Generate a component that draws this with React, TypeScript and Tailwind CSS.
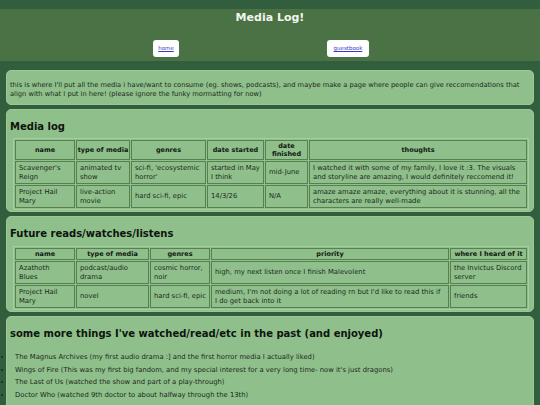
import React from "react";

const panel = "mx-[6px] rounded-[5px] border border-[#9cc897] bg-[#8fbf8b] px-[3px]";
const th = "border border-[#56804f] px-0 py-[1px] text-center text-[6.5px] font-bold leading-[8px] text-[#101a10]";
const td = "border border-[#56804f] px-[3px] py-[2px] align-middle leading-[8.5px] text-[#1b2a1b]";

const items = [
  "The Magnus Archives (my first audio drama :] and the first horror media I actually liked)",
  "Wings of Fire (This was my first big fandom, and my special interest for a very long time- now it's just dragons)",
  "The Last of Us (watched the show and part of a play-through)",
  "Doctor Who (watched 9th doctor to about halfway through the 13th)",
];

export default function App() {
  return (
    <div className="min-h-[405px] bg-[#335e3e] pt-[9px] text-[#1b2a1b]" style={{ fontFamily: '"DejaVu Sans", Verdana, sans-serif' }}>
      <div className="h-[52px] bg-[#4b7245]">
        <h1 className="pt-[2px] text-center text-[11px] font-bold leading-[14px] text-[#f2f5f0]">Media Log!</h1>
        <div className="mt-[15px] flex pl-[153px]">
          <div className="flex h-[17px] w-[26px] items-center justify-center rounded-[3px] bg-white">
            <a href="#" className="text-[5.5px] text-[#3838c0] underline">home</a>
          </div>
          <div className="ml-[148px] flex h-[17px] w-[42px] items-center justify-center rounded-[3px] bg-white">
            <a href="#" className="text-[5.5px] text-[#3838c0] underline">guestbook</a>
          </div>
        </div>
      </div>

      <div className="mt-[9px] flex flex-col gap-[4px]">
        <div className={panel + " pb-[6px] pt-[10px]"}>
          <p className="-mr-[3px] text-[6.7px] leading-[8.5px]">
            this is where I'll put all the media i have/want to consume (eg. shows, podcasts), and maybe make a page where people can give reccomendations that<br />align with what I put in here! (please ignore the funky mormatting for now)
          </p>
        </div>

        <div className={panel + " pb-[1px] pt-[11px]"}>
          <h2 className="text-[10px] font-bold leading-[12px] text-[#0d150d]">Media log</h2>
          <table className="mx-[3px] mt-[5px] w-[516px] table-fixed border-separate border-spacing-[1px] border border-[#a5cda0] text-[6.8px]">
            <colgroup>
              <col className="w-[60px]" />
              <col className="w-[54px]" />
              <col className="w-[75px]" />
              <col className="w-[57px]" />
              <col className="w-[43px]" />
              <col />
            </colgroup>
            <thead>
              <tr className="h-[18px]">
                <th className={th}>name</th>
                <th className={th + " whitespace-nowrap"}>type of media</th>
                <th className={th}>genres</th>
                <th className={th}>date started</th>
                <th className={th}>date finished</th>
                <th className={th}>thoughts</th>
              </tr>
            </thead>
            <tbody>
              <tr className="h-[23px]">
                <td className={td}>Scavenger's Reign</td>
                <td className={td}>animated tv show</td>
                <td className={td}>sci-fi, 'ecosystemic horror'</td>
                <td className={td}>started in May I think</td>
                <td className={td}>mid-June</td>
                <td className={td}>I watched it with some of my family, I love it :3. The visuals and storyline are amazing, I would definitely reccomend it!</td>
              </tr>
              <tr className="h-[23px]">
                <td className={td}>Project Hail Mary</td>
                <td className={td}>live-action movie</td>
                <td className={td}>hard sci-fi, epic</td>
                <td className={td}>14/3/26</td>
                <td className={td}>N/A</td>
                <td className={td}>amaze amaze amaze, everything about it is stunning, all the characters are really well-made</td>
              </tr>
            </tbody>
          </table>
        </div>

        <div className={panel + " pb-[1px] pt-[11px]"}>
          <h2 className="text-[10px] font-bold leading-[12px] text-[#0d150d]">Future reads/watches/listens</h2>
          <table className="mx-[3px] mt-[6px] w-[516px] table-fixed border-separate border-spacing-[1px] border border-[#a5cda0] text-[6.8px]">
            <colgroup>
              <col className="w-[60px]" />
              <col className="w-[73px]" />
              <col className="w-[60px]" />
              <col className="w-[238px]" />
              <col />
            </colgroup>
            <thead>
              <tr className="h-[11px]">
                <th className={th}>name</th>
                <th className={th}>type of media</th>
                <th className={th}>genres</th>
                <th className={th}>priority</th>
                <th className={th}>where I heard of it</th>
              </tr>
            </thead>
            <tbody>
              <tr className="h-[21px]">
                <td className={td}>Azathoth<br />Blues</td>
                <td className={td}>podcast/audio drama</td>
                <td className={td}>cosmic horror, noir</td>
                <td className={td}>high, my next listen once I finish Malevolent</td>
                <td className={td}>the Invictus Discord server</td>
              </tr>
              <tr className="h-[21px]">
                <td className={td}>Project Hail Mary</td>
                <td className={td}>novel</td>
                <td className={td}>hard sci-fi, epic</td>
                <td className={td}>medium, I'm not doing a lot of reading rn but I'd like to read this if<br />I do get back into it</td>
                <td className={td}>friends</td>
              </tr>
            </tbody>
          </table>
        </div>

        <div className={panel + " pb-[10px] pt-[11px]"}>
          <h2 className="text-[10px] font-bold leading-[12px] text-[#0d150d]">some more things I've watched/read/etc in the past (and enjoyed)</h2>
          <ul className="-ml-[9px] mt-[11px] text-[6.8px] leading-[12.5px]">
            {items.map((t) => (
              <li key={t} className="flex items-center">
                <span className="mr-[12px] h-[2px] w-[2px] shrink-0 rounded-full bg-[#1b2a1b]" />
                <span>{t}</span>
              </li>
            ))}
          </ul>
        </div>
      </div>
    </div>
  );
}
